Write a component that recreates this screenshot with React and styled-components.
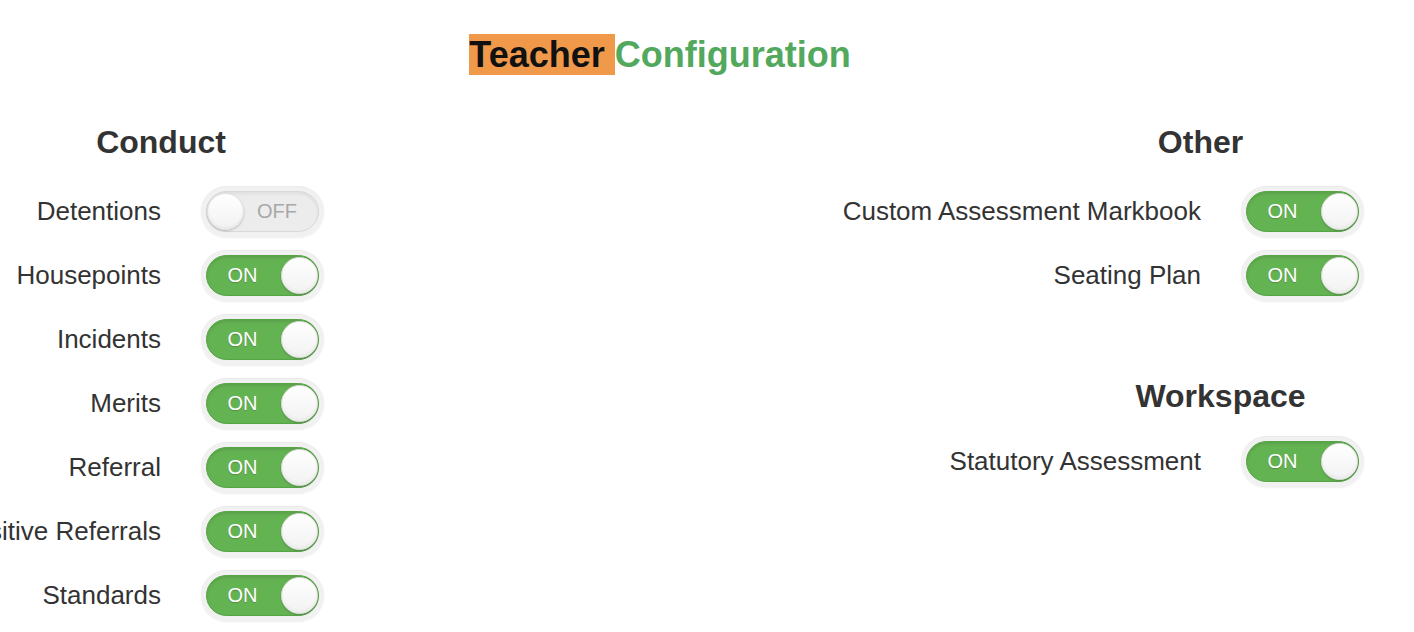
import React from 'react'
import styled, { createGlobalStyle } from 'styled-components'

const GlobalStyle = createGlobalStyle`
    html, body {
        margin: 0;
        padding: 0;
        background: #fff;
        overflow: hidden;
    }
    body {
        font-family: "Liberation Sans", Arial, Helvetica, sans-serif;
        color: #333;
    }
`

const Page = styled.div`
    width: 1414px;
    height: 632px;
    box-sizing: border-box;
    padding-top: 34px;
`

const Title = styled.h1`
    margin: 0;
    padding-right: 94px;
    text-align: center;
    font-size: 36px;
    font-weight: 700;
    line-height: 41px;
    color: #52a85c;
`

const Highlight = styled.span`
    background: #f0994b;
    color: #111;
`

const Columns = styled.div`
    display: flex;
    justify-content: space-between;
    padding-right: 50px;
    margin-top: 49px;
`

const Column = styled.div`
    display: flex;
    flex-direction: column;
    align-items: ${p => (p.$right ? 'flex-end' : 'flex-start')};
`

const Section = styled.section`
    display: flex;
    flex-direction: column;
    align-items: inherit;
    margin-top: ${p => p.$top || 0}px;
`

const Heading = styled.h2`
    margin: 0 0 ${p => p.$gap || 18}px;
    width: ${p => p.$span}px;
    text-align: center;
    font-size: 32px;
    font-weight: 700;
    line-height: 37px;
    color: #333;
`

const Row = styled.div`
    display: flex;
    align-items: center;
    height: 64px;
    gap: 40px;
`

const Label = styled.div`
    display: flex;
    justify-content: flex-end;
    width: ${p => (p.$width ? `${p.$width}px` : 'auto')};
    white-space: nowrap;
    font-size: 26px;
    line-height: 30px;
    color: #333;
`

const SwitchFrame = styled.div`
    flex-shrink: 0;
    width: 123px;
    height: 51px;
    padding: 5px;
    box-sizing: border-box;
    border-radius: 26px;
    background: #f1f1f1;
    box-shadow: 0 1px 2px rgba(0, 0, 0, 0.07), inset 0 1px 1px rgba(0, 0, 0, 0.03);
`

const Track = styled.div`
    display: flex;
    flex-direction: ${p => (p.$on ? 'row' : 'row-reverse')};
    align-items: center;
    height: 100%;
    box-sizing: border-box;
    border-radius: 21px;
    background: ${p => (p.$on ? '#64b352' : '#ececec')};
    border: 1px solid ${p => (p.$on ? '#57a447' : '#d8d8d8')};
    box-shadow: inset 0 2px 3px rgba(0, 0, 0, ${p => (p.$on ? 0.1 : 0.06)});
`

const StateText = styled.span`
    flex: 1;
    text-align: center;
    padding: ${p => (p.$on ? '0 3px 0 0' : '0 8px 0 0')};
    font-size: 20px;
    line-height: 20px;
    color: ${p => (p.$on ? '#fff' : '#a8a8a8')};
    text-shadow: ${p => (p.$on ? '0 1px 1px rgba(0,0,0,0.2)' : 'none')};
`

const Knob = styled.span`
    width: 37px;
    height: 37px;
    box-sizing: border-box;
    border-radius: 50%;
    background: linear-gradient(#ffffff, #f2f2f2);
    border: 1px solid #e2e2e2;
    box-shadow: 0 1px 2px rgba(0, 0, 0, 0.22), inset 0 -2px 3px rgba(0, 0, 0, 0.04);
`

const Toggle = ({ on }) => (
    <SwitchFrame>
        <Track $on={on}>
            <StateText $on={on}>{on ? 'ON' : 'OFF'}</StateText>
            <Knob />
        </Track>
    </SwitchFrame>
)

const SettingRow = ({ label, on, labelWidth }) => (
    <Row>
        <Label $width={labelWidth}>{label}</Label>
        <Toggle on={on} />
    </Row>
)

const conduct = [
    { label: 'Detentions', on: false },
    { label: 'Housepoints', on: true },
    { label: 'Incidents', on: true },
    { label: 'Merits', on: true },
    { label: 'Referral', on: true },
    { label: 'Positive Referrals', on: true },
    { label: 'Standards', on: true },
]

const other = [
    { label: 'Custom Assessment Markbook', on: true },
    { label: 'Seating Plan', on: true },
]

const workspace = [{ label: 'Statutory Assessment', on: true }]

const App = () => {
    return (
        <Page>
            <GlobalStyle />
            <Title>
                <Highlight>Teacher </Highlight>Configuration
            </Title>
            <Columns>
                <Column>
                    <Section>
                        <Heading $span={322}>Conduct</Heading>
                        {conduct.map(s => (
                            <SettingRow key={s.label} label={s.label} on={s.on} labelWidth={161} />
                        ))}
                    </Section>
                </Column>
                <Column $right>
                    <Section>
                        <Heading $span={327}>Other</Heading>
                        {other.map(s => (
                            <SettingRow key={s.label} label={s.label} on={s.on} />
                        ))}
                    </Section>
                    <Section $top={71}>
                        <Heading $span={287} $gap={14}>Workspace</Heading>
                        {workspace.map(s => (
                            <SettingRow key={s.label} label={s.label} on={s.on} />
                        ))}
                    </Section>
                </Column>
            </Columns>
        </Page>
    )
}

export default App
